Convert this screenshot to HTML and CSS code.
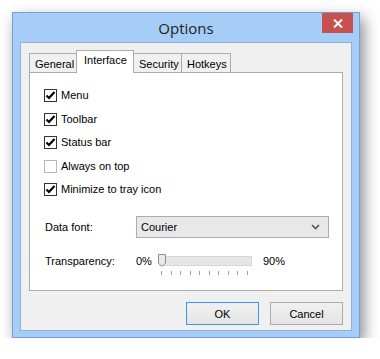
FILE: index.html
```html
<!DOCTYPE html>
<html>
<head>
<meta charset="utf-8">
<link rel="stylesheet" href="styles.css">
</head>
<body>
<div class="window">
  <div class="titlebar">
    <div class="title">Options</div>
    <div class="close"><svg width="10" height="9" viewBox="0 0 10 9"><path d="M1 0.5 L9 8.5 M9 0.5 L1 8.5" stroke="#fff" stroke-width="2"/></svg></div>
  </div>
  <div class="client">
    <div class="tabs">
      <div class="tab">General</div>
      <div class="tab active">Interface</div>
      <div class="tab">Security</div>
      <div class="tab">Hotkeys</div>
    </div>
    <div class="panel">
      <div class="checks">
        <div class="check"><span class="box on"><svg width="11" height="11" viewBox="0 0 11 11"><path d="M1.5 5.5 L4 8 L9.5 2" fill="none" stroke="#000" stroke-width="2.2"/></svg></span>Menu</div>
        <div class="check"><span class="box on"><svg width="11" height="11" viewBox="0 0 11 11"><path d="M1.5 5.5 L4 8 L9.5 2" fill="none" stroke="#000" stroke-width="2.2"/></svg></span>Toolbar</div>
        <div class="check"><span class="box on"><svg width="11" height="11" viewBox="0 0 11 11"><path d="M1.5 5.5 L4 8 L9.5 2" fill="none" stroke="#000" stroke-width="2.2"/></svg></span>Status bar</div>
        <div class="check"><span class="box off"></span>Always on top</div>
        <div class="check"><span class="box on"><svg width="11" height="11" viewBox="0 0 11 11"><path d="M1.5 5.5 L4 8 L9.5 2" fill="none" stroke="#000" stroke-width="2.2"/></svg></span>Minimize to tray icon</div>
      </div>
      <div class="row font-row">
        <div class="label">Data font:</div>
        <div class="select"><span>Courier</span><svg width="9" height="6" viewBox="0 0 9 6"><path d="M1 1 L4.5 4.5 L8 1" fill="none" stroke="#555" stroke-width="1.6"/></svg></div>
      </div>
      <div class="row trans-row">
        <div class="label">Transparency:</div>
        <div class="pct">0%</div>
        <div class="slider">
          <div class="track"></div>
          <svg class="thumb" width="9" height="13" viewBox="0 0 9 13"><path d="M0.5 0.5 H7.5 V9 L4 12.5 L0.5 9 Z" fill="#eaeaea" stroke="#8f8f8f"/></svg>
          <div class="ticks"><i></i><i></i><i></i><i></i><i></i><i></i><i></i><i></i><i></i><i></i></div>
        </div>
        <div class="pct2">90%</div>
      </div>
    </div>
    <div class="buttons">
      <div class="btn default">OK</div>
      <div class="btn">Cancel</div>
    </div>
  </div>
</div>
</body>
</html>
```
FILE: styles.css
```css
* { box-sizing: border-box; }
html, body { margin: 0; padding: 0; background: #fff; }
body {
  padding: 12px 0 0 12px;
  font-family: "Liberation Sans", Arial, sans-serif;
  font-size: 11px;
  color: #000;
}
.window {
  width: 348px;
  height: 326px;
  background: #a5cdf7;
  border: 1px solid #7a9fcf;
  box-shadow: 4px 6px 14px rgba(0,0,0,0.45);
  display: flex;
  flex-direction: column;
  padding: 0 7px 6px 7px;
}
.titlebar {
  height: 29px;
  display: flex;
  justify-content: center;
  align-items: center;
  position: relative;
}
.title {
  font-family: "Segoe UI", "Open Sans", "DejaVu Sans", sans-serif;
  font-size: 15px;
  color: #1e1e1e;
  margin-top: 1px;
}
.close {
  position: absolute;
  right: -1px;
  top: 0;
  width: 31px;
  height: 20px;
  background: #c75050;
  display: flex;
  align-items: center;
  justify-content: center;
}
.client {
  flex: 1;
  background: #f0f0f0;
  border: 1px solid #8fb0d8;
  padding: 7px 8px 0 8px;
  display: flex;
  flex-direction: column;
}
.tabs {
  display: flex;
  height: 22px;
  align-items: flex-end;
  position: relative;
  z-index: 1;
}
.tab {
  height: 19px;
  border: 1px solid #acacac;
  border-bottom: none;
  background: #f0f0f0;
  padding: 3px 5px 0 6px;
  margin-right: -1px;
  line-height: 14px;
}
.tab:first-child { width: 48px; padding-left: 5px; }
.tab.active {
  height: 23px;
  background: #fff;
  width: 58px;
  padding: 2px 0 0 7px;
  margin-bottom: -1px;
  z-index: 2;
}
.tab:nth-child(3) { width: 49px; padding-left: 5px; }
.tab:nth-child(4) { width: 50px; padding-left: 5px; }
.panel {
  height: 219px;
  background: #fff;
  border: 1px solid #acacac;
  padding: 16px 0 0 14px;
}
.checks { display: flex; flex-direction: column; }
.check {
  height: 23.5px;
  display: flex;
  align-items: flex-start;
  line-height: 13px;
}
.box {
  width: 13px;
  height: 13px;
  border: 1px solid #333;
  background: #fff;
  margin-right: 4px;
  display: flex;
  align-items: center;
  justify-content: center;
}
.box.off { border-color: #b8b8b8; }
.row { display: flex; align-items: center; }
.label { width: 92px; padding-left: 1px; }
.font-row { margin-top: 9px; height: 22px; }
.select {
  width: 193px;
  height: 22px;
  background: #e8e8e8;
  border: 1px solid #acacac;
  display: flex;
  align-items: center;
  justify-content: space-between;
  padding: 0 8px 0 4px;
}
.trans-row { margin-top: 16px; align-items: flex-start; }
.trans-row .label, .pct, .pct2 { padding-top: 1px; }
.pct { width: 22px; }
.slider { width: 102px; position: relative; height: 22px; }
.track {
  margin: 2px 0 0 1px;
  width: 93px;
  height: 10px;
  background: #e3e7e7;
  border: 1px solid #d6d6d6;
}
.thumb { position: absolute; left: 0; top: 0; }
.ticks {
  display: flex;
  gap: 8.5px;
  margin: 5px 0 0 3px;
}
.ticks i { display: block; width: 1px; height: 4px; background: #a0a0a0; }
.pct2 { padding-left: 3px; }
.buttons {
  display: flex;
  justify-content: flex-end;
  gap: 11px;
  padding-top: 11px;
  padding-right: 0;
}
.btn {
  width: 73px;
  height: 23px;
  border: 1px solid #acacac;
  background: linear-gradient(#f0f0f0, #e5e5e5);
  display: flex;
  align-items: center;
  justify-content: center;
}
.btn.default { border-color: #3399ff; }
```
